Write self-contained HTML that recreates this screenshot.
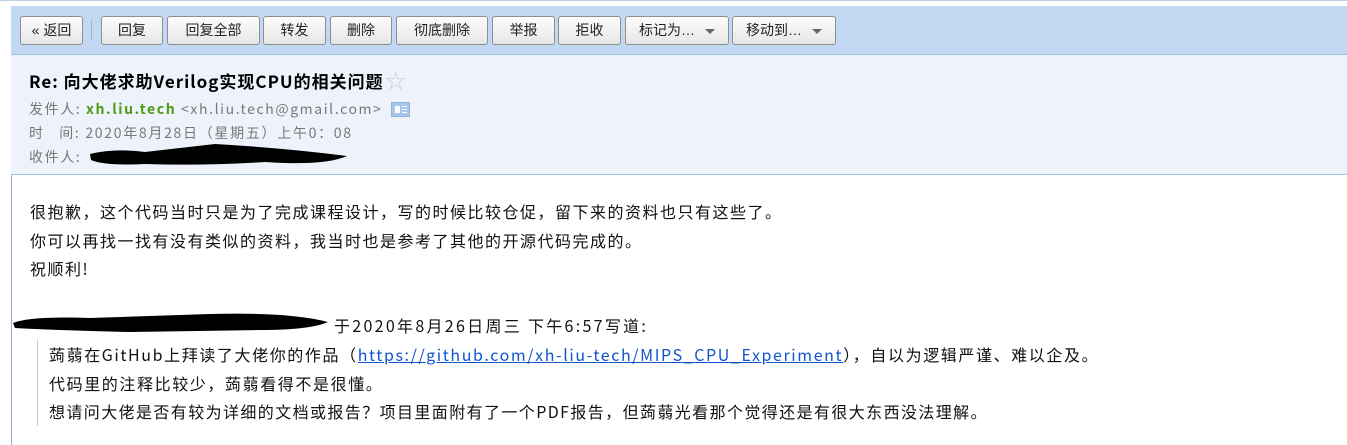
<!DOCTYPE html>
<html><head><meta charset="utf-8"><style>
body{margin:0;width:1347px;height:445px;overflow:hidden;background:#fff;font-family:"Noto Sans CJK SC","Liberation Sans",sans-serif;position:relative}
.a{position:absolute;white-space:nowrap}
.tb{position:absolute;left:11px;right:0;top:6px;height:48px;background:#c3d9f3;border-bottom:1px solid #a3c2e2}
.hd{position:absolute;left:11px;right:0;top:55px;height:119px;background:#eef3fb;border-bottom:1px solid #a3c2e2}
.btn{position:absolute;top:16px;height:27px;border:1px solid #8e8e8e;border-radius:3px;background:linear-gradient(#fdfdfd,#e6e6e6);font-size:14px;line-height:27px;text-align:center;color:#222;box-sizing:content-box;font-family:"Liberation Sans","Noto Sans CJK SC",sans-serif}
.tri{display:inline-block;width:0;height:0;border-left:5px solid transparent;border-right:5px solid transparent;border-top:5px solid #666;margin-left:10px;vertical-align:middle}
.g{color:#777;font-size:14px;line-height:20px;letter-spacing:1.6px}
.b{font-size:16px;color:#111;line-height:22px;letter-spacing:1.5px}
</style></head><body>
<div class="a" style="left:0;top:0;width:1347px;height:1px;background:#b7cfe9"></div>
<div class="a" style="left:11px;top:6px;width:1px;height:439px;background:#8fb3dc"></div>
<div class="tb"></div>
<div class="hd"></div>
<div class="btn" style="left:20px;width:61px">« 返回</div>
<div class="a" style="left:91px;top:20px;width:1px;height:21px;background:#9fb6cf"></div>
<div class="btn" style="left:101px;width:60px">回复</div>
<div class="btn" style="left:167px;width:91px">回复全部</div>
<div class="btn" style="left:263px;width:61px">转发</div>
<div class="btn" style="left:330px;width:60px">删除</div>
<div class="btn" style="left:396px;width:90px">彻底删除</div>
<div class="btn" style="left:492px;width:61px">举报</div>
<div class="btn" style="left:558px;width:61px">拒收</div>
<div class="btn" style="left:625px;width:102px">标记为…<span class="tri"></span></div>
<div class="btn" style="left:732px;width:102px">移动到…<span class="tri"></span></div>

<div class="a" style="left:29px;top:68px;font-size:17px;line-height:24px;font-weight:bold;color:#000;letter-spacing:1px">Re: 向大佬求助Verilog实现CPU的相关问题<span style="color:#ccc;font-weight:normal;font-size:20px;margin-left:2px">☆</span></div>
<div class="a g" style="left:29px;top:99px">发件人: <b style="color:#4a9a12">xh.liu.tech</b> &lt;xh.liu.tech@gmail.com&gt;</div>
<div class="a" style="left:391px;top:102px;width:17px;height:13px;background:#a9c6ec;border:1px solid #8fb3dc"><div style="position:absolute;left:3px;top:3px;width:5px;height:7px;background:#fff"></div><div style="position:absolute;left:10px;top:3px;width:5px;height:1px;background:#fff;box-shadow:0 3px #fff,0 6px #fff"></div></div>
<div class="a g" style="left:29px;top:123px;letter-spacing:1.7px">时&nbsp;&nbsp;&nbsp;间: 2020年8月28日（星期五）上午0：08</div>
<div class="a g" style="left:29px;top:147px">收件人:</div>
<svg class="a" style="left:85px;top:140px" width="270" height="30"><path d="M5 14 Q30 8 60 12 L130 4 Q200 8 262 16 Q240 26 180 22 Q120 26 60 24 Q20 26 6 20Z" fill="#000"/></svg>

<div class="a b" style="left:30px;top:200px">很抱歉，这个代码当时只是为了完成课程设计，写的时候比较仓促，留下来的资料也只有这些了。</div>
<div class="a b" style="left:30px;top:229px">你可以再找一找有没有类似的资料，我当时也是参考了其他的开源代码完成的。</div>
<div class="a b" style="left:30px;top:257px">祝顺利!</div>
<svg class="a" style="left:10px;top:310px" width="320" height="25"><path d="M3 13 Q20 6 80 8 L200 4 Q280 2 318 12 Q300 20 250 20 L120 22 Q40 20 5 18Z" fill="#000"/></svg>
<div class="a b" style="left:334px;top:314px;letter-spacing:2.3px">于2020年8月26日周三 下午6:57写道:</div>
<div class="a" style="left:37px;top:339px;width:1px;height:87px;background:#ccc"></div>
<div class="a b" style="left:49px;top:343px;letter-spacing:1.6px">蒟蒻在GitHub上拜读了大佬你的作品（<span style="color:#15c;text-decoration:underline">https://github.com/xh-liu-tech/MIPS_CPU_Experiment</span>），自以为逻辑严谨、难以企及。</div>
<div class="a b" style="left:49px;top:372px;letter-spacing:1.6px">代码里的注释比较少，蒟蒻看得不是很懂。</div>
<div class="a b" style="left:49px;top:400px;letter-spacing:1.4px">想请问大佬是否有较为详细的文档或报告？项目里面附有了一个PDF报告，但蒟蒻光看那个觉得还是有很大东西没法理解。</div>
</body></html>
